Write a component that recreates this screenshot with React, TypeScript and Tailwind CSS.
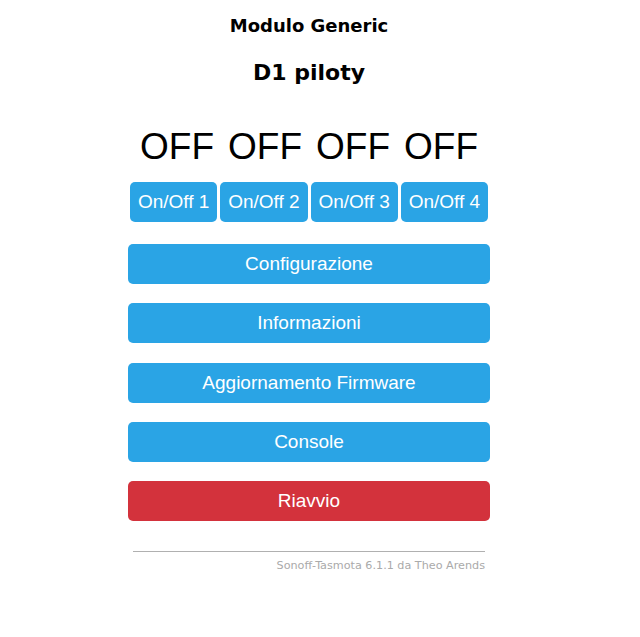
const relays = [1, 2, 3, 4]

// gaps between menu buttons, as measured
const menu = [
  { label: 'Configurazione', gap: 'mt-0' },
  { label: 'Informazioni', gap: 'mt-[19px]' },
  { label: 'Aggiornamento Firmware', gap: 'mt-[20px]' },
  { label: 'Console', gap: 'mt-[19px]' },
]

export default function App() {
  return (
    <div className="min-h-[637px] w-[640px] bg-white">
      <div className="ml-[128px] w-[362px] pt-[14px] text-black">
        {/* Header */}
        <div className="text-center font-['DejaVu_Sans',Verdana,sans-serif] font-bold">
          <div className="text-[18px] leading-[24px]">Modulo Generic</div>
          <div className="mt-[20px] text-[22px] leading-[30px]">D1 piloty</div>
        </div>

        {/* Relay state */}
        <div className="mt-[37px] flex justify-center font-['Liberation_Sans',Arial,sans-serif] text-[37px] leading-[44px]">
          {relays.map((r) => (
            <div key={r} className="w-[88px] text-center">OFF</div>
          ))}
        </div>

        {/* Toggle buttons */}
        <div className="mt-[13px] mx-[2px] grid grid-cols-4 gap-[3px] font-['Liberation_Sans',Arial,sans-serif]">
          {relays.map((r) => (
            <button
              type="button"
              key={r}
              className="h-[40px] rounded-[5px] bg-[#2aa4e5] text-[19px] text-white"
            >
              On/Off {r}
            </button>
          ))}
        </div>

        {/* Menu */}
        <div className="mt-[22px] flex flex-col font-['Liberation_Sans',Arial,sans-serif]">
          {menu.map((m) => (
            <button
              type="button"
              key={m.label}
              className={`${m.gap} h-[40px] w-full rounded-[5px] bg-[#2aa4e5] text-[19px] text-white`}
            >
              {m.label}
            </button>
          ))}
          <button
            type="button"
            className="mt-[19px] h-[40px] w-full rounded-[5px] bg-[#d3323c] text-[19px] text-white"
          >
            Riavvio
          </button>
        </div>

        {/* Footer */}
        <div className="mx-[5px] mt-[30px] border-t border-[#b0b0b0]" />
        <div className="mx-[5px] mt-[7px] text-right font-['DejaVu_Sans',Verdana,sans-serif] text-[11.2px] leading-[14px] text-[#aaa]">
          Sonoff-Tasmota 6.1.1 da Theo Arends
        </div>
      </div>
    </div>
  )
}
